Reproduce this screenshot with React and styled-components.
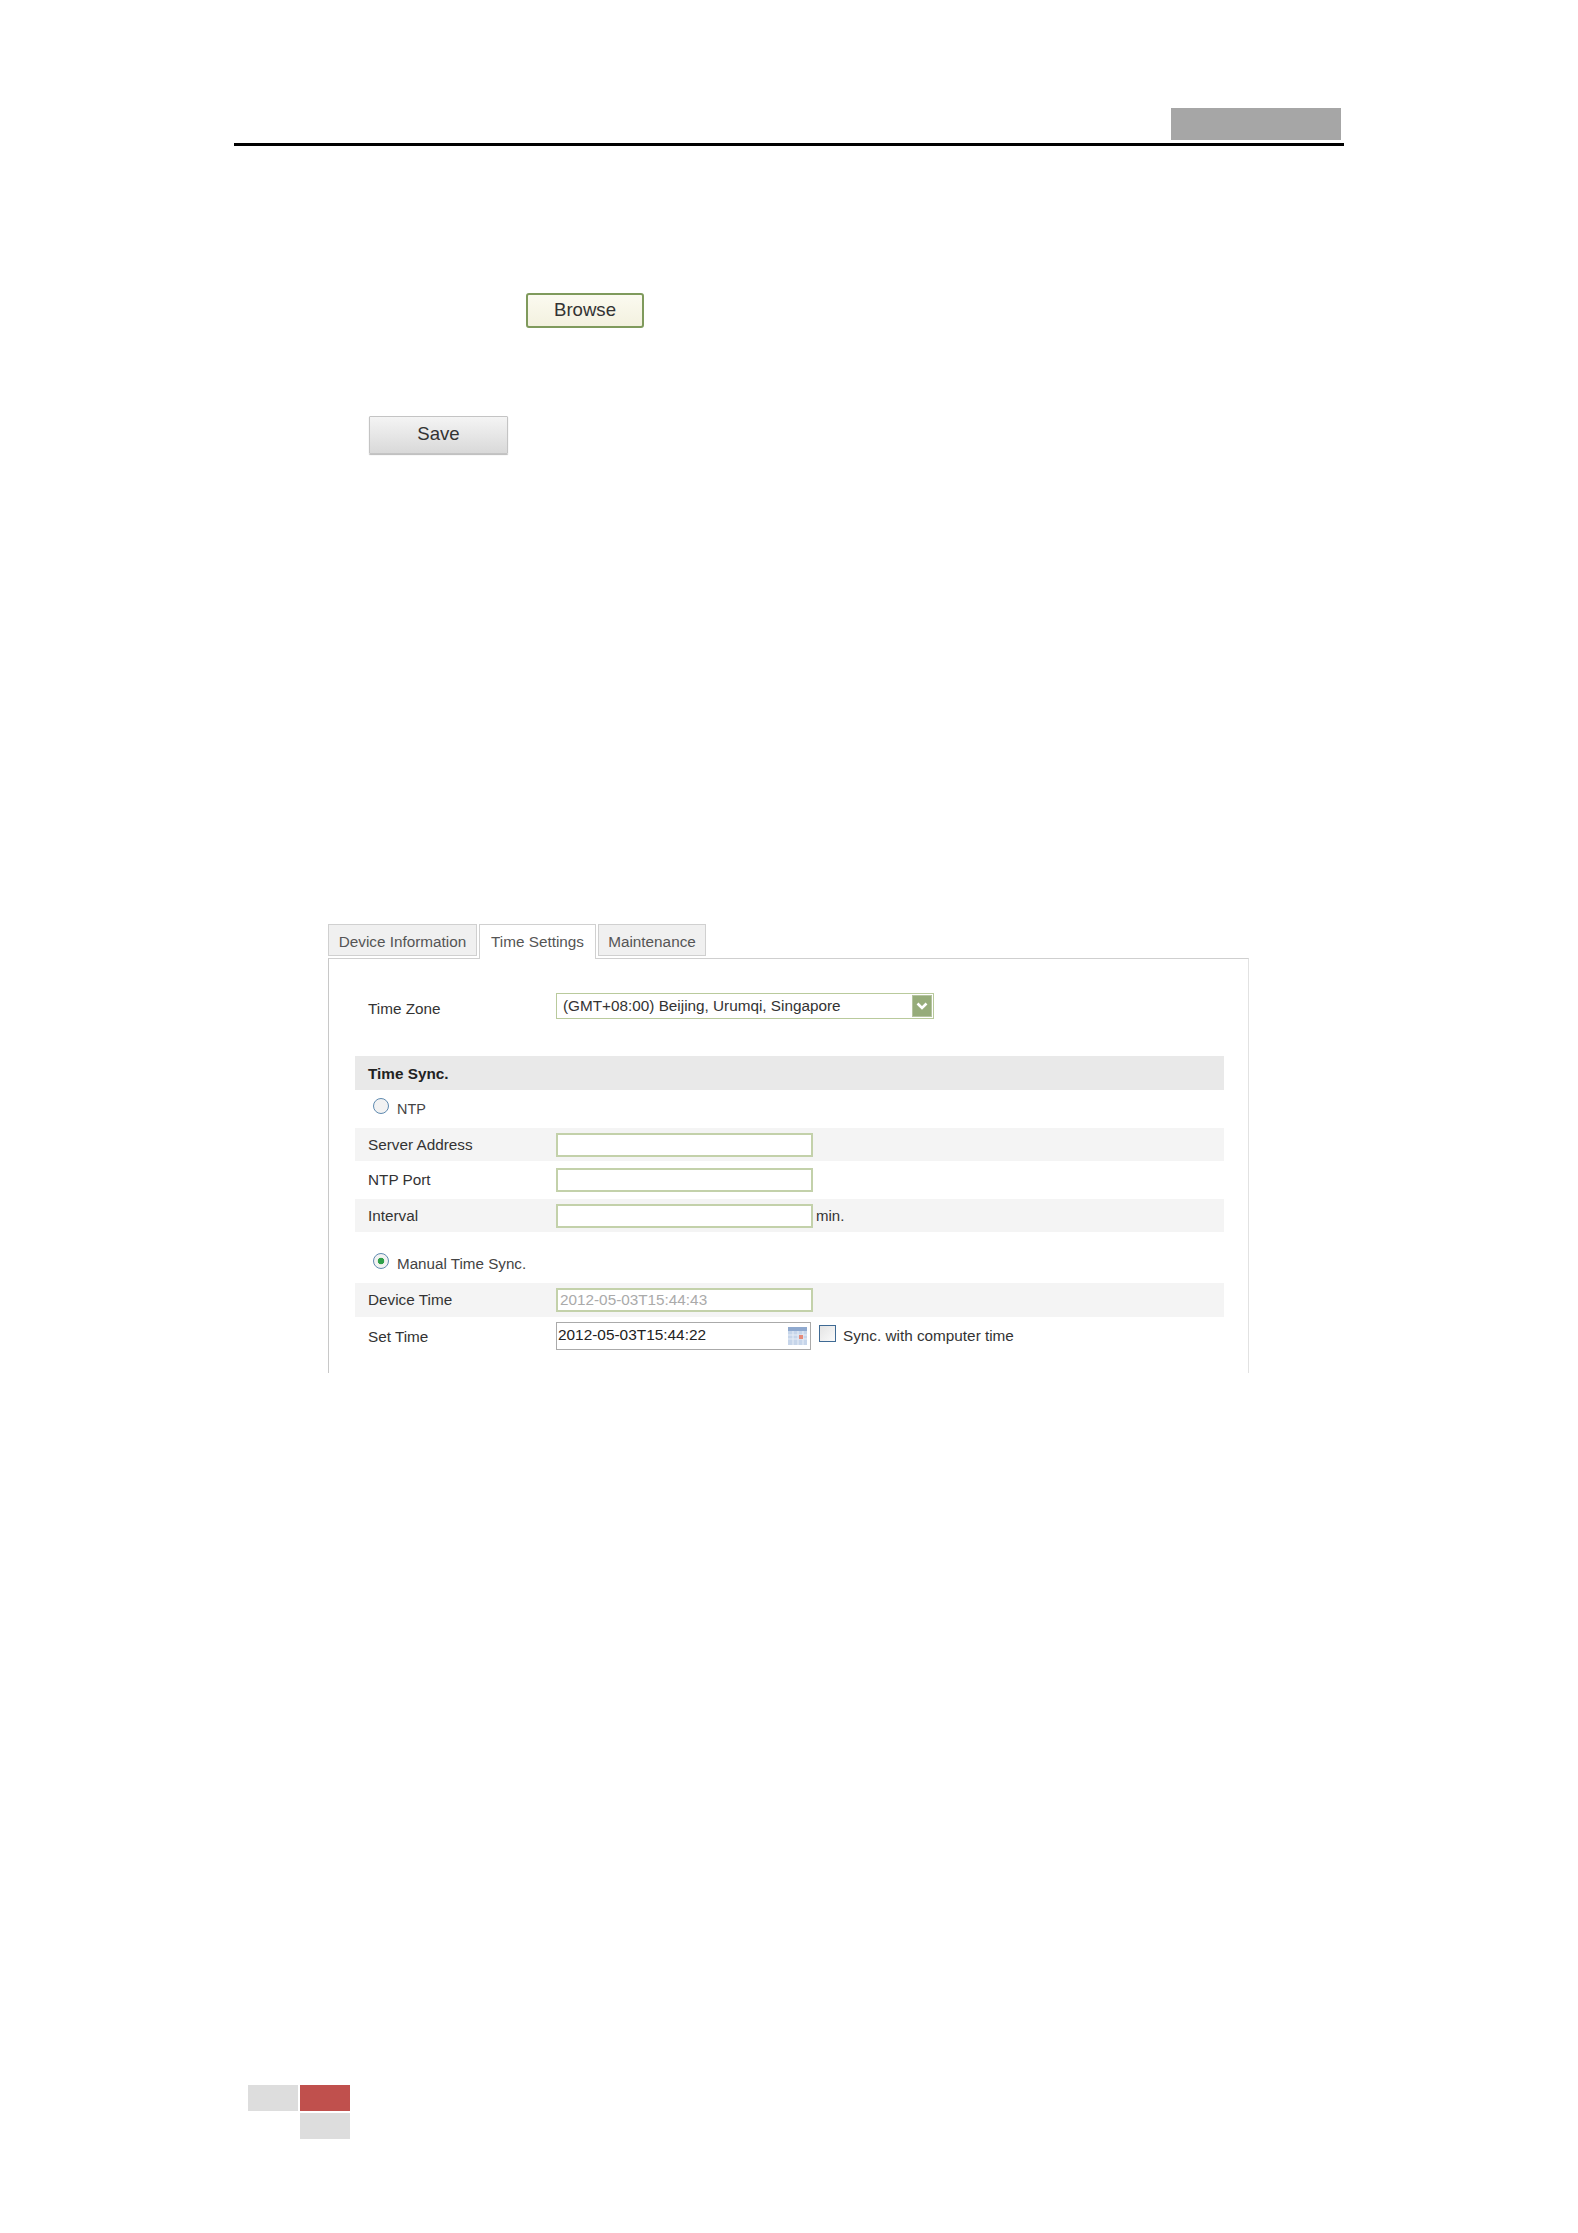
import React from 'react';
import styled, { createGlobalStyle } from 'styled-components';

const GlobalStyle = createGlobalStyle`
    body {
        margin: 0;
        background: #fff;
        font-family: "Liberation Sans", Arial, sans-serif;
        color: #333;
    }
`

const Page = styled.div`
    width: 1578px;
    height: 2233px;
    overflow: hidden;
    display: flex;
    flex-direction: column;
    align-items: flex-start;
`

const Header = styled.header`
    width: 1110px;
    margin: 108px 0 0 234px;
    display: flex;
    flex-direction: column;
`

const HeaderTag = styled.div`
    align-self: flex-end;
    width: 170px;
    height: 32px;
    margin-right: 3px;
    background: #a6a6a6;
`

const HeaderRule = styled.div`
    height: 3px;
    margin-top: 3px;
    background: #000;
`

const ActionButton = styled.button`
    box-sizing: border-box;
    width: ${props => props.$width}px;
    height: ${props => props.$height}px;
    margin-left: ${props => props.$left}px;
    margin-top: ${props => props.$top}px;
    padding: 0 0 2px;
    font-family: inherit;
    font-size: 18.6px;
    color: #333;
    border-radius: ${props => props.$green ? 3 : 1}px;
    border: ${props => props.$green ? '2px solid #7f9a5c' : '1px solid #c4c4c4'};
    background: ${props => props.$green
        ? 'linear-gradient(#fbfaf0, #f3f1df)'
        : 'linear-gradient(#f4f4f4, #d9d9d9)'};
    box-shadow: ${props => props.$green ? 'none' : '0 1px 1px #bbb'};
`

const Window = styled.section`
    width: 921px;
    margin: 470px 0 0 328px;
`

const TabBar = styled.div`
    display: flex;
    align-items: flex-start;
    gap: 2px;
    height: 35px;
    margin-bottom: -1px;
    position: relative;
`

const Tab = styled.div`
    box-sizing: border-box;
    width: ${props => props.$width}px;
    height: ${props => props.$active ? 35 : 32}px;
    display: flex;
    align-items: center;
    justify-content: center;
    padding-top: ${props => props.$active ? 0 : 3}px;
    font-size: 15.3px;
    color: #555;
    background: ${props => props.$active ? '#fff' : '#f0f0f0'};
    border: 1px solid #d0d0d0;
    border-bottom: ${props => props.$active ? 'none' : '1px solid #d0d0d0'};
`

const Panel = styled.div`
    box-sizing: border-box;
    height: 415px;
    padding: 34px 24px 0 26px;
    border: 1px solid #cfcfcf;
    border-bottom: none;
    border-left-color: #c8c8c8;
    border-right-color: #e2e2e2;
`

const ZoneRow = styled.div`
    display: grid;
    grid-template-columns: 188px 1fr;
    padding-left: 13px;
    margin-bottom: 37px;
`

const SelectBox = styled.div`
    box-sizing: border-box;
    width: 378px;
    height: 26px;
    display: flex;
    align-items: center;
    justify-content: space-between;
    padding: 0 1px 0 6px;
    font-size: 15.3px;
    color: #333;
    border: 1px solid #b9ca9c;
    background: #fff;
`

const SelectArrow = styled.span`
    width: 20px;
    height: 22px;
    display: flex;
    align-items: center;
    justify-content: center;
    background: #96ac7a;
    border: 1px solid #b5c4a0;
    box-sizing: border-box;
`

const SectionTitle = styled.div`
    height: 34px;
    line-height: 36px;
    padding-left: 13px;
    font-size: 15.3px;
    font-weight: bold;
    color: #222;
    background: #e9e9e9;
`

const RadioRow = styled.label`
    height: ${props => props.$height}px;
    display: flex;
    align-items: ${props => props.$manual ? 'flex-end' : 'flex-start'};
    padding: ${props => props.$manual ? '0 0 14px 18px' : '8px 0 0 18px'};
    box-sizing: border-box;
    font-size: ${props => props.$manual ? 15.2 : 14.4}px;
    color: #444;
    span {
        margin-left: 8px;
        margin-top: 3px;
        line-height: 16px;
        position: relative;
        top: ${props => props.$manual ? 3 : 0}px;
    }
`

const Radio = styled.input.attrs({ type: 'radio' })`
    appearance: none;
    box-sizing: border-box;
    flex: none;
    width: 16px;
    height: 16px;
    margin: 0;
    border-radius: 50%;
    border: 1.5px solid #5f8ab0;
    background: #f2f2f2;
    &:checked {
        background: radial-gradient(circle, #2fa04a 0 3px, #f2f2f2 3.6px);
    }
`

const FormRow = styled.div`
    height: ${props => props.$height}px;
    display: grid;
    grid-template-columns: 188px 1fr;
    align-items: center;
    padding-left: 13px;
    background: ${props => props.$shaded ? '#f4f4f4' : '#fff'};
`

const FieldLabel = styled.div`
    font-size: 15.3px;
    color: #333;
`

const ZoneLabel = styled(FieldLabel)`
    margin-top: 7px;
`

const Field = styled.div`
    display: flex;
    align-items: center;
`

const TextInput = styled.input`
    box-sizing: border-box;
    width: 257px;
    height: 24px;
    padding: 0 2px;
    font-family: inherit;
    font-size: 15.3px;
    color: #aaa;
    background: #fff;
    border: 2px solid #c3d1aa;
    outline: none;
`

const Unit = styled.span`
    margin-left: 3px;
    font-size: 15px;
    color: #333;
`

const SetTimeRow = styled.div`
    display: grid;
    grid-template-columns: 188px 1fr;
    padding: 5px 0 0 13px;
`

const SetTimeLabel = styled(FieldLabel)`
    margin-top: 6px;
`

const DateBox = styled.div`
    box-sizing: border-box;
    width: 255px;
    height: 28px;
    display: flex;
    align-items: center;
    justify-content: space-between;
    padding: 0 3px 0 1px;
    font-size: 15.4px;
    color: #222;
    border: 1px solid #aaa;
    background: #fff;
`

const DateText = styled.span`
    margin-top: -3px;
`

const Check = styled.input.attrs({ type: 'checkbox' })`
    appearance: none;
    box-sizing: border-box;
    width: 17px;
    height: 17px;
    margin: 3px 0 0 8px;
    border: 1px solid #3f6a94;
    background: linear-gradient(135deg, #e4e4e4, #fafafa);
`

const CheckText = styled.span`
    margin: 0 0 0 7px;
    font-size: 15.3px;
    color: #333;
    align-self: flex-start;
    padding-top: 5px;
`

const SetTimeField = styled(Field)`
    align-items: flex-start;
`

const FooterMark = styled.div`
    display: grid;
    grid-template-columns: 50px 50px;
    grid-auto-rows: 26px;
    gap: 2px;
    margin: 712px 0 0 248px;
`

const MarkCell = styled.div`
    grid-column: ${props => props.$col};
    background: ${props => props.$red ? '#c0504d' : '#dddddd'};
`

const ChevronIcon = () => (
    <svg width="12" height="10" viewBox="0 0 12 10">
        <path d="M1.5 2.5 L6 7 L10.5 2.5" fill="none" stroke="#fff" strokeWidth="2.6" />
    </svg>
)

const CalendarIcon = () => (
    <svg width="19" height="18" viewBox="0 0 19 18">
        <rect x="0" y="0" width="19" height="18" fill="#c6d5ea" />
        <rect x="0" y="0" width="19" height="4" fill="#8fa9cf" />
        <path d="M0 8h19M0 12h19M5 4v14M10 4v14M15 4v14" stroke="#e8eef7" strokeWidth="1" />
        <rect x="11" y="8" width="4" height="4" fill="#e58a7a" />
    </svg>
)

export default function App() {
    return (
        <Page>
            <GlobalStyle />
            <Header>
                <HeaderTag />
                <HeaderRule />
            </Header>

            <ActionButton $green $width={118} $height={35} $left={526} $top={147}>Browse</ActionButton>
            <ActionButton $width={139} $height={38} $left={369} $top={88}>Save</ActionButton>

            <Window>
                <TabBar>
                    <Tab $width={149}>Device Information</Tab>
                    <Tab $active $width={117}>Time Settings</Tab>
                    <Tab $width={108}>Maintenance</Tab>
                </TabBar>
                <Panel>
                    <ZoneRow>
                        <ZoneLabel>Time Zone</ZoneLabel>
                        <SelectBox>
                            (GMT+08:00) Beijing, Urumqi, Singapore
                            <SelectArrow><ChevronIcon /></SelectArrow>
                        </SelectBox>
                    </ZoneRow>

                    <SectionTitle>Time Sync.</SectionTitle>
                    <RadioRow $height={38}>
                        <Radio name="sync" />
                        <span>NTP</span>
                    </RadioRow>
                    <FormRow $shaded $height={33}>
                        <FieldLabel>Server Address</FieldLabel>
                        <Field><TextInput readOnly /></Field>
                    </FormRow>
                    <FormRow $height={38}>
                        <FieldLabel>NTP Port</FieldLabel>
                        <Field><TextInput readOnly /></Field>
                    </FormRow>
                    <FormRow $shaded $height={33}>
                        <FieldLabel>Interval</FieldLabel>
                        <Field><TextInput readOnly /><Unit>min.</Unit></Field>
                    </FormRow>
                    <RadioRow $manual $height={51}>
                        <Radio name="sync" defaultChecked />
                        <span>Manual Time Sync.</span>
                    </RadioRow>
                    <FormRow $shaded $height={34}>
                        <FieldLabel>Device Time</FieldLabel>
                        <Field><TextInput readOnly value="2012-05-03T15:44:43" /></Field>
                    </FormRow>
                    <SetTimeRow>
                        <SetTimeLabel>Set Time</SetTimeLabel>
                        <SetTimeField>
                            <DateBox>
                                <DateText>2012-05-03T15:44:22</DateText>
                                <CalendarIcon />
                            </DateBox>
                            <Check readOnly />
                            <CheckText>Sync. with computer time</CheckText>
                        </SetTimeField>
                    </SetTimeRow>
                </Panel>
            </Window>

            <FooterMark>
                <MarkCell $col={1} />
                <MarkCell $col={2} $red />
                <MarkCell $col={2} />
            </FooterMark>
        </Page>
    )
}
